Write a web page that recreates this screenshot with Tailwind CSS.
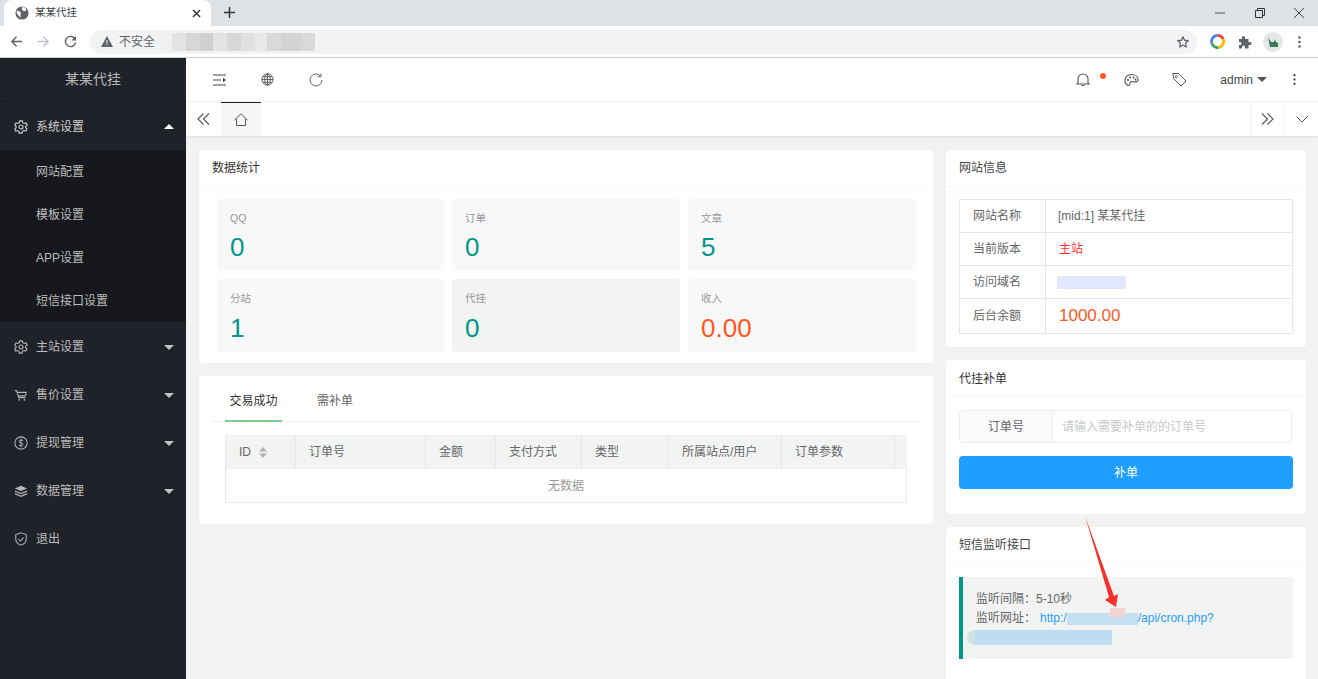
<!DOCTYPE html>
<html lang="zh-CN">
<head>
<meta charset="UTF-8">
<title>某某代挂</title>
<script src="https://cdn.jsdelivr.net/npm/@tailwindcss/browser@4"></script>
</head>
<body class="bg-[#f2f2f2] font-['Liberation_Sans','Noto_Sans_CJK_SC',sans-serif]">
<div class="relative w-[1318px] h-[679px] overflow-hidden flex flex-col">

  <!-- browser chrome -->
  <div class="h-[26px] bg-[#dee1e6] flex items-end shrink-0">
    <div class="ml-[4px] w-[207px] h-[26px] bg-white rounded-t-lg flex items-center pl-[11px] pr-[10px]">
      <svg class="w-[14px] h-[14px]" viewBox="0 0 16 16"><circle cx="8" cy="8" r="7.5" fill="#5f6368"/><path d="M2 5l3 1 2 2-1 2 1 3-3-2-2-3zM8 1l4 1 1 3-3 1-2-2z" fill="#fff"/></svg>
      <span class="ml-[6px] text-[10.5px] text-[#444]">某某代挂</span>
      <svg class="ml-auto w-[9px] h-[9px]" viewBox="0 0 10 10"><path d="M1 1l8 8M9 1l-8 8" stroke="#333" stroke-width="1.6"/></svg>
    </div>
    <svg class="ml-[13px] mb-[8px] w-[11px] h-[11px]" viewBox="0 0 12 12"><path d="M6 0v12M0 6h12" stroke="#333" stroke-width="1.6"/></svg>
    <div class="ml-auto flex items-center h-[26px] pr-[14px]">
      <svg class="mr-[30px] w-[10px] h-[10px]" viewBox="0 0 10 10"><path d="M0 5h10" stroke="#555" stroke-width="1"/></svg>
      <svg class="mr-[29px] w-[10px] h-[10px]" viewBox="0 0 10 10"><path d="M.5 2.500h7v7h-7zM2.500 2.500v-2h7v7h-2" fill="none" stroke="#333" stroke-width="1"/></svg>
      <svg class="w-[10px] h-[10px]" viewBox="0 0 10 10"><path d="M0 0l10 10M10 0L0 10" stroke="#444" stroke-width="1"/></svg>
    </div>
  </div>
  <div class="h-[32px] bg-white border-b border-[#c9cbce] flex items-center shrink-0">
    <div class="w-[90px] flex items-center pl-[10px] gap-[14px]">
      <svg class="w-[13px] h-[13px]" viewBox="0 0 14 14"><path d="M13 7H2M7 2L2 7l5 5" fill="none" stroke="#5f6368" stroke-width="1.5"/></svg>
      <svg class="w-[13px] h-[13px]" viewBox="0 0 14 14"><path d="M1 7h11M7 2l5 5-5 5" fill="none" stroke="#bdc1c6" stroke-width="1.5"/></svg>
      <svg class="w-[13px] h-[13px]" viewBox="0 0 14 14"><path d="M12 4.500A5.500 5.500 0 1 0 12.500 8" fill="none" stroke="#5f6368" stroke-width="1.5"/><path d="M13 1v5H8z" fill="#5f6368"/></svg>
    </div>
    <div class="relative w-[1107px] h-[24px] rounded-full bg-[#f1f3f4] flex items-center pl-[11px] pr-[7px]">
      <svg class="w-[12px] h-[11px]" viewBox="0 0 12 11"><path d="M6 0l6 11H0z" fill="#5f6368"/><path d="M5.500 4h1v3.500h-1zM5.500 8.300h1v1h-1z" fill="#fff"/></svg>
      <span class="ml-[6px] text-[12px] text-[#5f6368]">不安全</span>
      <div class="ml-[5px] flex h-[18px] items-stretch">
        <div class="w-[12px] bg-[#f0f0f1]"></div><div class="w-[14px] bg-[#e2e3e3]"></div><div class="w-[14px] bg-[#d6d7d8]"></div><div class="w-[13px] bg-[#cfd0d1]"></div><div class="w-[14px] bg-[#e2e3e3]"></div><div class="w-[14px] bg-[#d6d7d7]"></div><div class="w-[14px] bg-[#e0e1e1]"></div><div class="w-[12px] bg-[#e9e9e9]"></div><div class="w-[14px] bg-[#d8d9d9]"></div><div class="w-[20px] bg-[#d2d3d3]"></div><div class="w-[14px] bg-[#d8d9d9]"></div>
      </div>
      <svg class="ml-auto w-[14px] h-[14px]" viewBox="0 0 24 24"><path d="M12 3l2.700 6 6.300.7-4.700 4.300 1.300 6.500-5.600-3.300-5.600 3.300L7.700 14 3 9.700 9.300 9z" fill="none" stroke="#5f6368" stroke-width="2.200" stroke-linejoin="round"/></svg>
    </div>
    <div class="flex items-center ml-[13px]">
      <svg class="mr-[13px] w-[15px] h-[15px]" viewBox="0 0 16 16"><g fill="none" stroke-width="3"><path d="M8 1.500A6.500 6.500 0 0 1 14 5.500" stroke="#ea4335"/><path d="M14 5.500A6.500 6.500 0 0 1 9 14.500" stroke="#fbbc05"/><path d="M9 14.500A6.500 6.500 0 0 1 2 10" stroke="#34a853"/><path d="M2 10A6.500 6.500 0 0 1 8 1.500" stroke="#4285f4"/></g></svg>
      <svg class="mr-[11px] w-[14px] h-[14px]" viewBox="0 0 14 14"><path d="M1 4h3V2.500a1.500 1.500 0 0 1 3 0V4h3.500v3H12a1.500 1.500 0 0 1 0 3h-1.500v3.500H7V12a1.500 1.500 0 0 0-3 0v1.500H1V10h1a1.500 1.500 0 0 0 0-3H1z" fill="#5f6368"/></svg>
      <div class="mr-[15px] w-[20px] h-[20px] rounded-full bg-[#e4e6e8] flex items-center justify-center"><svg class="w-[12px] h-[12px]" viewBox="0 0 12 12"><path d="M1 1l3 5h3l1-3 1 3 2 1v4H3z" fill="#3d7a5c"/></svg></div>
      <svg class="w-[3px] h-[12px]" viewBox="0 0 3 12"><circle cx="1.500" cy="1.500" r="1.300" fill="#5f6368"/><circle cx="1.500" cy="6" r="1.300" fill="#5f6368"/><circle cx="1.500" cy="10.500" r="1.300" fill="#5f6368"/></svg>
    </div>
  </div>

  <div class="flex flex-1 min-h-0">
    <!-- sidebar -->
    <aside class="w-[186px] shrink-0 bg-[#20222a] text-[12px] text-[#bcbcbc]">
      <div class="h-[44px] flex items-center justify-center text-[14px] text-[#b8b8b8] border-b border-dotted border-[#15171b]">某某代挂</div>
      <div class="h-[48px] pt-[1px] flex items-center pl-[14px] pr-[12px] text-[#d0d0d0]">
        <svg class="w-[14px] h-[14px]" viewBox="0 0 16 16"><path d="M6.500 1h3l.5 2 1.800 1 2-.6 1.400 2.500L13.300 7.300v1.400l1.500 1.400-1.400 2.500-2-.6-1.800 1-.5 2h-3l-.5-2-1.800-1-2 .6L.9 10.100l1.500-1.400V7.300L.9 5.900l1.400-2.500 2 .6 1.800-1z" fill="none" stroke="#cfcfcf" stroke-width="1.300"/><circle cx="8" cy="8" r="2.300" fill="none" stroke="#cfcfcf" stroke-width="1.300"/></svg>
        <span class="ml-[8px]">系统设置</span>
        <span class="ml-auto w-0 h-0 border-x-[5px] border-x-transparent border-b-[5px] border-b-white"></span>
      </div>
      <div class="bg-[#16181d]">
        <div class="h-[43px] flex items-center pl-[36px]">网站配置</div>
        <div class="h-[43px] flex items-center pl-[36px]">模板设置</div>
        <div class="h-[43px] flex items-center pl-[36px]">APP设置</div>
        <div class="h-[43px] flex items-center pl-[36px]">短信接口设置</div>
      </div>
      <div class="h-[48px] pt-[2px] flex items-center pl-[14px] pr-[12px]">
        <svg class="w-[14px] h-[14px]" viewBox="0 0 16 16"><path d="M6.500 1h3l.5 2 1.800 1 2-.6 1.400 2.500L13.300 7.300v1.400l1.500 1.400-1.400 2.500-2-.6-1.800 1-.5 2h-3l-.5-2-1.800-1-2 .6L.9 10.100l1.500-1.400V7.300L.9 5.900l1.400-2.500 2 .6 1.800-1z" fill="none" stroke="#b5b5b5" stroke-width="1.300"/><circle cx="8" cy="8" r="2.300" fill="none" stroke="#b5b5b5" stroke-width="1.300"/></svg>
        <span class="ml-[8px]">主站设置</span>
        <span class="ml-auto w-0 h-0 border-x-[5px] border-x-transparent border-t-[5px] border-t-[#c2c2c2]"></span>
      </div>
      <div class="h-[48px] pt-[2px] flex items-center pl-[14px] pr-[12px]">
        <svg class="w-[14px] h-[14px]" viewBox="0 0 16 16"><path d="M1 3h2l2.500 8h7.500M4 5h10l-1 4H5.200" fill="none" stroke="#b5b5b5" stroke-width="1.200"/><circle cx="6" cy="13.500" r="1" fill="#b5b5b5"/><circle cx="12" cy="13.500" r="1" fill="#b5b5b5"/></svg>
        <span class="ml-[8px]">售价设置</span>
        <span class="ml-auto w-0 h-0 border-x-[5px] border-x-transparent border-t-[5px] border-t-[#c2c2c2]"></span>
      </div>
      <div class="h-[48px] pt-[2px] flex items-center pl-[14px] pr-[12px]">
        <svg class="w-[14px] h-[14px]" viewBox="0 0 16 16"><circle cx="8" cy="8" r="7" fill="none" stroke="#b5b5b5" stroke-width="1.200"/><path d="M10.500 5.500C9.500 4.300 5.800 4.400 5.800 6.300c0 2.200 4.700 1.200 4.700 3.400 0 2-4 2-5 .6M8 3v10" fill="none" stroke="#b5b5b5" stroke-width="1.100"/></svg>
        <span class="ml-[8px]">提现管理</span>
        <span class="ml-auto w-0 h-0 border-x-[5px] border-x-transparent border-t-[5px] border-t-[#c2c2c2]"></span>
      </div>
      <div class="h-[48px] pt-[2px] flex items-center pl-[14px] pr-[12px]">
        <svg class="w-[14px] h-[14px]" viewBox="0 0 16 16"><path d="M8 2l7 3-7 3-7-3z" fill="#b5b5b5"/><path d="M1 8l7 3 7-3M1 11l7 3 7-3" fill="none" stroke="#b5b5b5" stroke-width="1.500"/></svg>
        <span class="ml-[8px]">数据管理</span>
        <span class="ml-auto w-0 h-0 border-x-[5px] border-x-transparent border-t-[5px] border-t-[#c2c2c2]"></span>
      </div>
      <div class="h-[48px] pt-[2px] flex items-center pl-[14px] pr-[12px]">
        <svg class="w-[14px] h-[14px]" viewBox="0 0 16 16"><path d="M8 1l6 2v5c0 3.500-3 6-6 7-3-1-6-3.500-6-7V3z" fill="none" stroke="#b5b5b5" stroke-width="1.200"/><path d="M5 8l2.300 2.300L11 6.500" fill="none" stroke="#b5b5b5" stroke-width="1.200"/></svg>
        <span class="ml-[8px]">退出</span>
      </div>
    </aside>

    <div class="flex-1 min-w-0 flex flex-col">
      <!-- top bar -->
      <div class="h-[44px] bg-white border-b border-[#f2f2f2] flex items-center shrink-0 text-[#444]">
        <svg class="ml-[27px] w-[13px] h-[12px]" viewBox="0 0 13 12"><path d="M0 1h13M0 6h8M0 11h13" stroke="#444" stroke-width="1.200"/><path d="M10 3.800L13 6l-3 2.200z" fill="#444"/></svg>
        <svg class="ml-[35px] w-[13px] h-[13px]" viewBox="0 0 14 14"><g fill="none" stroke="#555" stroke-width="1"><circle cx="7" cy="7" r="6"/><ellipse cx="7" cy="7" rx="3" ry="6"/><path d="M1 7h12M1.800 4h10.400M1.800 10h10.400M7 1v12"/></g></svg>
        <svg class="ml-[35px] w-[14px] h-[14px]" viewBox="0 0 14 14"><path d="M11.500 3A6 6 0 1 0 13 7" fill="none" stroke="#666" stroke-width="1"/><path d="M12 .5v3.200H8.800" fill="none" stroke="#666" stroke-width="1"/></svg>
        <div class="ml-auto flex items-center">
          <div class="relative mr-[34px]">
            <svg class="w-[14px] h-[15px]" viewBox="0 0 14 15"><path d="M2 11V7a5 5 0 0 1 10 0v4l1 1H1zM5.500 13.500h3" fill="none" stroke="#555" stroke-width="1.100"/></svg>
            <span class="absolute top-[1px] left-[24px] w-[6px] h-[6px] rounded-full bg-[#ff5722]"></span>
          </div>
          <svg class="mr-[33px] w-[15px] h-[14px]" viewBox="0 0 15 14"><path d="M7.500 1.500C3.500 1.500 1 4 1 7.500c0 3 2 5 3.500 5s1.300-1.300 1.500-2.500 1-1.500 2.500-1.300 5.500.8 5.500-1.700c0-3-2.500-5.500-6.500-5.500z" fill="none" stroke="#555" stroke-width="1.100"/><circle cx="4" cy="7" r="1" fill="#555"/><circle cx="6" cy="4.500" r="1" fill="#555"/><circle cx="9.500" cy="4.500" r="1" fill="#555"/><circle cx="11.500" cy="6.500" r="1" fill="#555"/></svg>
          <svg class="mr-[33px] w-[15px] h-[15px]" viewBox="0 0 15 15"><path d="M1 1.500h5.500l7.500 7.500-5 5-7.500-7.500z" fill="none" stroke="#555" stroke-width="1" stroke-linejoin="round"/><circle cx="4.300" cy="4.700" r="1.100" fill="none" stroke="#555" stroke-width=".9"/></svg>
          <span class="text-[12px] text-[#444]">admin</span>
          <span class="ml-[4px] mr-[26px] w-0 h-0 border-x-[5px] border-x-transparent border-t-[5px] border-t-[#555]"></span>
          <svg class="mr-[22px] w-[3px] h-[11px]" viewBox="0 0 3 11"><circle cx="1.500" cy="1.200" r="1.100" fill="#333"/><circle cx="1.500" cy="5.500" r="1.100" fill="#333"/><circle cx="1.500" cy="9.800" r="1.100" fill="#333"/></svg>
        </div>
      </div>
      <!-- page tabs -->
      <div class="h-[34px] bg-white flex items-stretch shrink-0 shadow-[0_1px_2px_rgba(0,0,0,.08)]">
        <div class="w-[35px] flex items-center justify-center"><svg class="w-[13px] h-[12px]" viewBox="0 0 13 12"><path d="M6.500 .5L1 6l5.500 5.500M12 .5L6.500 6l5.500 5.500" fill="none" stroke="#555" stroke-width="1.100"/></svg></div>
        <div class="w-[40px] bg-[#f6f6f6] border-t border-[#20222a] flex items-center justify-center"><svg class="w-[14px] h-[13px]" viewBox="0 0 14 13"><path d="M.5 7L7 .8 13.500 7M2.500 6v6.500h9V6" fill="none" stroke="#555" stroke-width="1"/></svg></div>
        <div class="ml-auto w-[34px] border-l border-[#f2f2f2] flex items-center justify-center"><svg class="w-[13px] h-[12px]" viewBox="0 0 13 12"><path d="M1 .5L6.500 6 1 11.500M6.500 .5L12 6l-5.500 5.500" fill="none" stroke="#555" stroke-width="1.100"/></svg></div>
        <div class="w-[34px] border-l border-[#f2f2f2] flex items-center justify-center"><svg class="w-[12px] h-[7px]" viewBox="0 0 12 7"><path d="M.5.500L6 6 11.500.500" fill="none" stroke="#555" stroke-width="1"/></svg></div>
      </div>

      <!-- content -->
      <div class="flex-1 min-h-0 overflow-hidden flex gap-[13px] pl-[13px] pt-[14px]">
        <div class="w-[734px] shrink-0 flex flex-col gap-[13px]">
          <section class="shrink-0 bg-white rounded-sm h-[213px]">
            <h2 class="h-[37px] px-[13px] flex items-center text-[12px] font-normal text-[#333] border-b border-[#f6f6f6]">数据统计</h2>
            <div class="grid grid-cols-[227px_228px_228px] gap-[8px] pt-[12px] pl-[18px]">
              <div class="h-[72px] bg-[#f8f8f8] rounded-sm pl-[13px] pt-[13px]"><p class="text-[10.5px] leading-[13px] text-[#999]">QQ</p><p class="text-[26px] leading-[30px] mt-[7px] text-[#009688]">0</p></div>
              <div class="h-[72px] bg-[#f8f8f8] rounded-sm pl-[13px] pt-[13px]"><p class="text-[10.5px] leading-[13px] text-[#999]">订单</p><p class="text-[26px] leading-[30px] mt-[7px] text-[#009688]">0</p></div>
              <div class="h-[72px] bg-[#f8f8f8] rounded-sm pl-[13px] pt-[13px]"><p class="text-[10.5px] leading-[13px] text-[#999]">文章</p><p class="text-[26px] leading-[30px] mt-[7px] text-[#009688]">5</p></div>
              <div class="h-[73px] bg-[#f8f8f8] rounded-sm pl-[13px] pt-[13px]"><p class="text-[10.5px] leading-[13px] text-[#999]">分站</p><p class="text-[26px] leading-[30px] mt-[8px] text-[#009688]">1</p></div>
              <div class="h-[73px] bg-[#f2f3f3] rounded-sm pl-[13px] pt-[13px]"><p class="text-[10.5px] leading-[13px] text-[#999]">代挂</p><p class="text-[26px] leading-[30px] mt-[8px] text-[#009688]">0</p></div>
              <div class="h-[73px] bg-[#f8f8f8] rounded-sm pl-[13px] pt-[13px]"><p class="text-[10.5px] leading-[13px] text-[#999]">收入</p><p class="text-[26px] leading-[30px] mt-[8px] text-[#ff5722]">0.00</p></div>
            </div>
          </section>
          <section class="shrink-0 bg-white rounded-sm h-[148px] px-[13px]">
            <div class="h-[46px] border-b border-[#f2f2f2] flex text-[12px] pl-[13px]">
              <div class="w-[57px] h-[46px] pt-[5px] border-b-2 border-[#7ccb95] flex items-center justify-center text-[#333]">交易成功</div>
              <div class="ml-[35px] w-[36px] pt-[5px] flex items-center justify-center text-[#666]">需补单</div>
            </div>
            <div class="mt-[13px] ml-[13px] w-[682px] border border-t-0 border-[#e8e8e8]">
              <div class="h-[34px] bg-[#f2f3f3] flex text-[12px] text-[#666] -mr-px">
                <div class="w-[70px] border-r border-[#e6e6e6] flex items-center pl-[13px]">ID
                  <svg class="ml-[8px] w-[8px] h-[11px]" viewBox="0 0 8 11"><path d="M4 0l4 4.500H0zM4 11L0 6.500h8z" fill="#b2b2b2"/></svg></div>
                <div class="w-[130px] border-r border-[#e6e6e6] flex items-center pl-[13px]">订单号</div>
                <div class="w-[70px] border-r border-[#e6e6e6] flex items-center pl-[13px]">金额</div>
                <div class="w-[86px] border-r border-[#e6e6e6] flex items-center pl-[13px]">支付方式</div>
                <div class="w-[87px] border-r border-[#e6e6e6] flex items-center pl-[13px]">类型</div>
                <div class="w-[113px] border-r border-[#e6e6e6] flex items-center pl-[13px]">所属站点/用户</div>
                <div class="w-[113px] border-r border-[#e6e6e6] flex items-center pl-[13px]">订单参数</div>
                <div class="flex-1"></div>
              </div>
              <div class="h-[33px] flex items-center justify-center text-[12px] text-[#999]">无数据</div>
            </div>
          </section>
        </div>

        <div class="w-[360px] shrink-0 flex flex-col gap-[13px]">
          <section class="shrink-0 bg-white rounded-sm h-[197px]">
            <h2 class="h-[37px] px-[13px] flex items-center text-[12px] font-normal text-[#444] border-b border-[#f6f6f6]">网站信息</h2>
            <div class="mt-[12px] mx-[13px] border border-[#e6e6e6] text-[12px] text-[#666]">
              <div class="h-[33px] flex border-b border-[#e6e6e6]"><div class="w-[86px] border-r border-[#e6e6e6] flex items-center pl-[13px]">网站名称</div><div class="flex items-center pl-[12px]">[mid:1] 某某代挂</div></div>
              <div class="h-[33px] flex border-b border-[#e6e6e6]"><div class="w-[86px] border-r border-[#e6e6e6] flex items-center pl-[13px]">当前版本</div><div class="flex items-center pl-[13px] text-[#ff2d2d]">主站</div></div>
              <div class="h-[33px] flex border-b border-[#e6e6e6]"><div class="w-[86px] border-r border-[#e6e6e6] flex items-center pl-[13px]">访问域名</div><div class="flex items-center pl-[11px]"><div class="w-[69px] h-[13px] bg-[#e1e7fd]"></div></div></div>
              <div class="h-[34px] flex"><div class="w-[86px] border-r border-[#e6e6e6] flex items-center pl-[13px]">后台余额</div><div class="flex items-center pl-[13px] text-[17px] text-[#ff5722]">1000.00</div></div>
            </div>
          </section>
          <section class="shrink-0 bg-white rounded-sm h-[154px]">
            <h2 class="h-[37px] pt-[2px] px-[13px] flex items-center text-[12px] font-normal text-[#333] border-b border-[#f6f6f6]">代挂补单</h2>
            <div class="mt-[13px] ml-[13px] w-[333px] h-[33px] flex border border-[#eeeeee] rounded-sm text-[12px]">
              <div class="w-[93px] bg-[#fafafa] border-r border-[#eeeeee] flex items-center justify-center text-[#666]">订单号</div>
              <div class="pl-[9px] flex items-center text-[12px] text-[#c8c8c8]">请输入需要补单的的订单号</div>
            </div>
            <button class="mt-[13px] ml-[13px] w-[334px] h-[33px] bg-[#1e9fff] rounded-sm text-[12px] text-white">补单</button>
          </section>
          <section class="shrink-0 bg-white rounded-sm h-[200px]">
            <h2 class="h-[36px] px-[13px] flex items-center text-[12px] font-normal text-[#444] border-b border-[#f9f9f9]">短信监听接口</h2>
            <div class="relative mt-[14px] ml-[13px] w-[334px] h-[82px] bg-[#f2f3f3] border-l-4 border-[#009688] pl-[13px] pt-[13px] text-[12px] leading-[19px] text-[#666]">
              <p>监听间隔：5-10秒</p>
              <p>监听网址：<span class="ml-[4px] text-[#1e9fff]">http:/<span class="inline-block w-[71px] h-[12px] align-middle bg-[#c5dff2]"></span>/api/cron.php?</span></p>
              <div class="absolute left-[147px] top-[31px] w-[15px] h-[9px] bg-[#f3d3d3]"></div>
              <div class="absolute left-[4px] top-[53px] w-[8px] h-[15px] rounded-l-full bg-[#cfe3e0]"></div>
              <div class="absolute left-[12px] top-[53px] w-[137px] h-[15px] bg-[#c0dcf0]"></div>
            </div>
          </section>
        </div>
      </div>
    </div>
  </div>

  <!-- red annotation arrow -->
  <svg class="absolute left-[1080px] top-[512px] w-[50px] h-[100px]" viewBox="0 0 50 100"><path d="M5 4L34 84l4-2-2 13-11-7 4-3z" fill="#f6302b"/></svg>
</div>
</body>
</html>
